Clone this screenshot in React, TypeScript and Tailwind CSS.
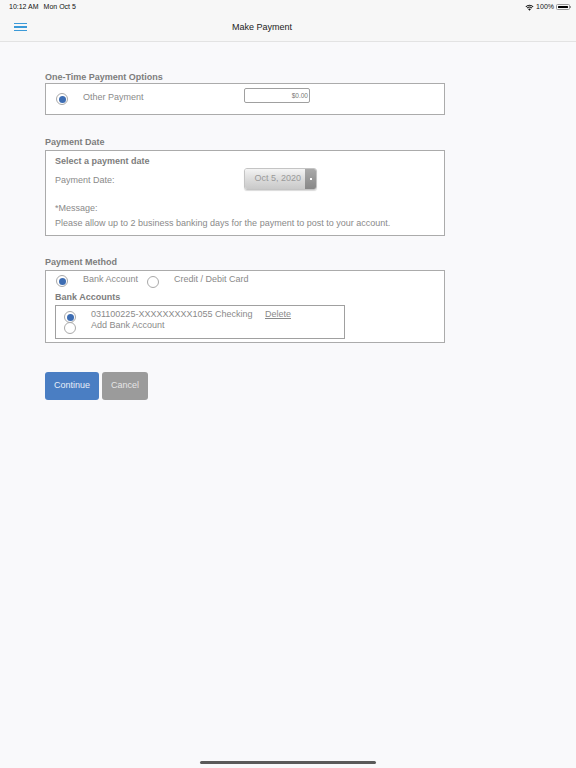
import React from "react";

const font = { fontFamily: '"Liberation Sans", Arial, Helvetica, sans-serif' };

function Radio({ checked }: { checked?: boolean }) {
  return (
    <div className="w-[12px] h-[12px] rounded-full border border-[#a9a9a9] bg-white flex items-center justify-center shrink-0">
      {checked && <div className="w-[7px] h-[7px] rounded-full bg-[#3d6db3]" />}
    </div>
  );
}

export default function App() {
  return (
    <div className="w-[576px] h-[768px] bg-[#f9f9fb] relative overflow-hidden" style={font}>
      {/* status bar */}
      <div className="h-[14px] bg-[#f7f7f7] flex items-center justify-between pl-[9px] pr-[5px] text-[7px] text-[#111]">
        <div className="flex gap-[5px]">
          <span>10:12 AM</span>
          <span>Mon Oct 5</span>
        </div>
        <div className="flex items-center gap-[2px]">
          <svg width="9" height="7" viewBox="0 0 18 14">
            <path d="M9 13.5 L6 10.2 A4.5 4.5 0 0 1 12 10.2 Z" fill="#111" />
            <path d="M3.6 7.6 A8 8 0 0 1 14.4 7.6 L13 9 A6 6 0 0 0 5 9 Z" fill="#111" />
            <path d="M1 4.8 A11.5 11.5 0 0 1 17 4.8 L15.6 6.3 A9.5 9.5 0 0 0 2.4 6.3 Z" fill="#111" />
          </svg>
          <span>100%</span>
          <div className="flex items-center">
            <div className="w-[14px] h-[6px] rounded-[1.5px] border border-[#999] p-[1px]">
              <div className="w-full h-full bg-black rounded-[0.5px]" />
            </div>
            <div className="w-[1px] h-[2px] bg-[#999]" />
          </div>
        </div>
      </div>
      {/* nav bar */}
      <div className="h-[28px] bg-[#f7f7f7] border-b border-[#e3e3e3] flex items-center pl-[14px]">
        <div className="flex flex-col gap-[2px] w-[218px] -mt-[1px]">
          <div className="w-[13px] h-[1.5px] bg-[#3c9ad8]" />
          <div className="w-[13px] h-[1.5px] bg-[#3c9ad8]" />
          <div className="w-[13px] h-[1.5px] bg-[#3c9ad8]" />
        </div>
        <span className="text-[9px] text-[#222]">Make Payment</span>
      </div>

      {/* content */}
      <div className="pl-[45px] pt-[29px] w-[445px]">
        {/* section 1 */}
        <div className="text-[9px] font-bold text-[#7d7d7d] leading-[12px]">One-Time Payment Options</div>
        <div className="h-[32px] border border-[#ababab] bg-white flex items-center pl-[10px]">
          <Radio checked />
          <span className="ml-[15px] text-[9px] text-[#8a8a8a] w-[161px] -mt-[2px]">Other Payment</span>
          <div className="w-[66px] h-[15px] border border-[#a0a0a0] rounded-[2px] bg-white flex items-center justify-end pr-[1px] -mt-[7px] text-[6.5px] text-[#777]">
            $0.00
          </div>
        </div>

        {/* section 2 */}
        <div className="text-[9px] font-bold text-[#7d7d7d] leading-[12px] mt-[21px] mb-[2px]">Payment Date</div>
        <div className="h-[86px] border border-[#ababab] bg-white pl-[9px] pt-[4px]">
          <div className="text-[9px] font-bold text-[#7d7d7d] leading-[11px] mt-[1px]">Select a payment date</div>
          <div className="flex items-center mt-[1px] h-[22px]">
            <span className="w-[189px] text-[9px] text-[#8a8a8a] mt-[4px]">Payment Date:</span>
            <div className="w-[73px] h-[22px] rounded-[3px] border border-[#c4c4c4] flex overflow-hidden shadow-[0_1px_1px_rgba(0,0,0,0.15)]">
              <div className="flex-1 bg-gradient-to-b from-[#f4f4f4] via-[#dcdcdc] to-[#c9c9c9] flex items-center justify-end pr-[4px] text-[9px] text-[#999]">
                Oct 5, 2020
              </div>
              <div className="w-[11px] bg-gradient-to-b from-[#aaa] to-[#888] flex items-center justify-center">
                <div className="w-[2px] h-[2px] bg-white" />
              </div>
            </div>
          </div>
          <div className="text-[9px] text-[#8a8a8a] leading-[11px] mt-[13px]">*Message:</div>
          <div className="text-[9px] text-[#8a8a8a] leading-[11px] mt-[4px]">
            Please allow up to 2 business banking days for the payment to post to your account.
          </div>
        </div>

        {/* section 3 */}
        <div className="text-[9px] font-bold text-[#7d7d7d] leading-[12px] mt-[20px] mb-[2px]">Payment Method</div>
        <div className="h-[73px] border border-[#ababab] bg-white pl-[10px] pt-[4px]">
          <div className="flex items-center h-[12px]">
            <Radio checked />
            <span className="ml-[15px] text-[9px] text-[#8a8a8a] -mt-[3px] w-[64px]">Bank Account</span>
            <div className="mt-[1px]"><Radio /></div>
            <span className="ml-[15px] text-[9px] text-[#8a8a8a] -mt-[3px]">Credit / Debit Card</span>
          </div>
          <div className="text-[9px] font-bold text-[#7d7d7d] leading-[11px] mt-[5px] -ml-[1px]">Bank Accounts</div>
          <div className="mt-[2px] -ml-[1px] w-[290px] h-[34px] border border-[#a0a0a0] relative">
            <div className="absolute left-[8px] top-[5px]"><Radio checked /></div>
            <div className="absolute left-[8px] top-[16px]"><Radio /></div>
            <div className="pl-[35px] pt-[3px] text-[9px] text-[#8a8a8a] leading-[11px]">
              <div className="flex">
                <span className="w-[174px]">031100225-XXXXXXXXX1055 Checking</span>
                <span className="underline">Delete</span>
              </div>
              <div>Add Bank Account</div>
            </div>
          </div>
        </div>

        {/* buttons */}
        <div className="flex gap-[3px] mt-[29px]">
          <div className="w-[54px] h-[28px] rounded-[3px] bg-[#4a7ec3] flex items-center justify-center text-[9px] text-[#e8eef8]">
            Continue
          </div>
          <div className="w-[46px] h-[28px] rounded-[3px] bg-[#9b9b9b] flex items-center justify-center text-[9px] text-[#e6e6e6]">
            Cancel
          </div>
        </div>
      </div>

      {/* home indicator */}
      <div className="absolute left-[200px] bottom-[4px] w-[176px] h-[3px] rounded-full bg-[#5a5a5a]" />
    </div>
  );
}
